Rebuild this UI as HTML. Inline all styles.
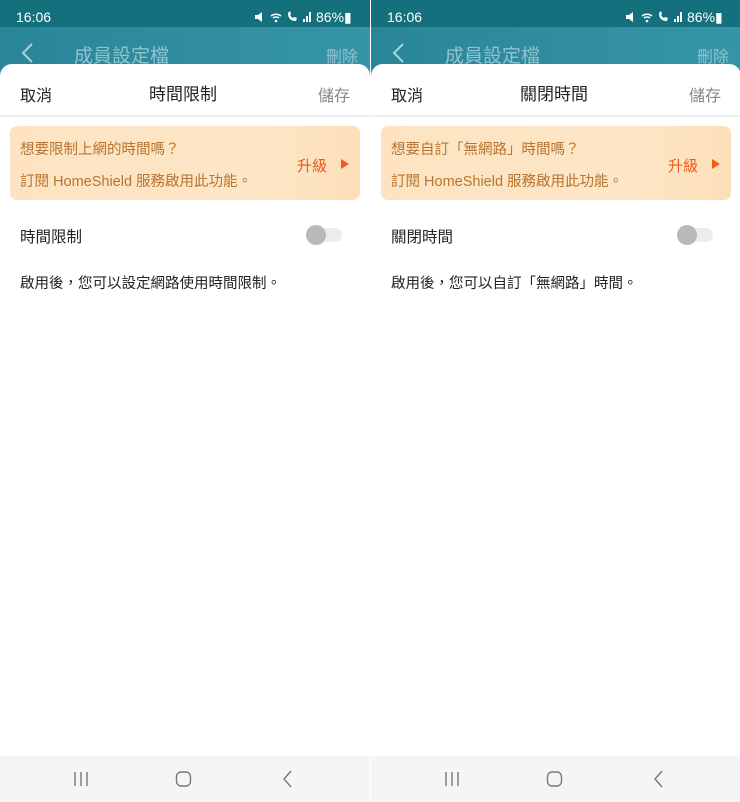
<!DOCTYPE html><html><head><meta charset="utf-8"><style>
*{margin:0;padding:0;box-sizing:border-box}
body{width:740px;height:802px;position:relative;background:#fff;font-family:"Liberation Sans","Noto Sans CJK TC",sans-serif;overflow:hidden}
.p{position:absolute;top:0;width:370px;height:802px;background:#fff;overflow:hidden}
.sb{position:absolute;top:0;left:0;right:0;height:27px;background:#15707e;color:#fff;font-size:14px}
.hd{position:absolute;top:27px;left:0;right:0;height:50px;background:linear-gradient(90deg,#2a8598,#3595a6)}
.a{position:absolute;white-space:nowrap}
.sh{position:absolute;top:64px;left:0;right:0;bottom:0;background:#fff;border-radius:12px 12px 0 0}
.bn{position:absolute;left:10px;right:10px;top:126px;height:74px;border-radius:7px;background:linear-gradient(90deg,#fde3c2,#fde6c6 70%,#fddfb9);color:#b8742f;font-size:14.5px}
.nav{position:absolute;left:0;right:0;top:756px;bottom:0;background:#f5f5f7}
.tg{position:absolute;left:306px;top:228px;width:36px;height:14px;border-radius:7px;background:#ececec}
.tg:before{content:"";position:absolute;left:0;top:-3px;width:20px;height:20px;border-radius:50%;background:#b9b9b9}
</style></head><body>
<div class="p" style="left:0">
<div class="sb"><span class="a" style="left:16px;top:9px">16:06</span><svg class="a" style="left:253px;top:11px" width="60" height="12"><path d="M2 4h3l4-3v10l-4-3H2z" fill="#fff"/><path d="M18 5a8 8 0 0 1 10 0M20 7a5 5 0 0 1 6 0" stroke="#fff" stroke-width="1.5" fill="none"/><circle cx="23" cy="10" r="1.3" fill="#fff"/><path d="M35 2q0 8 8 8l1-3-3-1-1 1q-2-1-3-3l1-1-1-3z" fill="#fff"/><path d="M50 11h2v-3h-2zM53 11h2v-6h-2zM56 11h2V1h-2z" fill="#fff"/></svg><span class="a" style="left:316px;top:9px">86%▮</span></div>
<div class="hd"><svg class="a" style="left:20px;top:15px" width="14" height="22"><path d="M12 2L3 11l9 9" stroke="#a9d3dc" stroke-width="2" fill="none"/></svg><span class="a" style="left:74px;top:14px;font-size:19px;color:#8fc3cf">成員設定檔</span><span class="a" style="left:326px;top:16px;font-size:16px;color:#8fc3cf">刪除</span></div>
<div class="sh">
<span class="a" style="left:20px;top:18px;font-size:16px;color:#222">取消</span>
<span class="a" style="left:149px;top:16px;font-size:17px;color:#222">時間限制</span>
<span class="a" style="left:318px;top:18px;font-size:16px;color:#888">儲存</span>
<div class="a" style="left:0;right:0;top:51px;height:2px;background:#eee"></div>
</div>
<div class="bn"><span class="a" style="left:10px;top:12px">想要限制上網的時間嗎？</span><span class="a" style="left:10px;top:44px">訂閱 HomeShield 服務啟用此功能。</span><span class="a" style="left:287px;top:29px;color:#f05a1e;font-size:15px">升級</span><svg class="a" style="left:331px;top:33px" width="8" height="10"><path d="M0 0L8 5L0 10Z" fill="#f05a1e"/></svg></div>
<span class="a" style="left:20px;top:225px;font-size:15.5px;color:#222">時間限制</span>
<div class="tg"></div>
<span class="a" style="left:20px;top:272px;font-size:14.5px;color:#222">啟用後，您可以設定網路使用時間限制。</span>
<div class="nav"><svg class="a" style="left:72px;top:15px" width="18" height="16"><path d="M3 1v14M9 1v14M15 1v14" stroke="#777" stroke-width="1.4"/></svg><svg class="a" style="left:175px;top:14px" width="18" height="18"><rect x="1.5" y="2" width="14" height="14" rx="4.5" stroke="#777" stroke-width="1.4" fill="none"/></svg><svg class="a" style="left:282px;top:14px" width="12" height="18"><path d="M9 1L2 9l7 8" stroke="#777" stroke-width="1.4" fill="none"/></svg></div>
</div>
<div class="p" style="left:371px">
<div class="sb"><span class="a" style="left:16px;top:9px">16:06</span><svg class="a" style="left:253px;top:11px" width="60" height="12"><path d="M2 4h3l4-3v10l-4-3H2z" fill="#fff"/><path d="M18 5a8 8 0 0 1 10 0M20 7a5 5 0 0 1 6 0" stroke="#fff" stroke-width="1.5" fill="none"/><circle cx="23" cy="10" r="1.3" fill="#fff"/><path d="M35 2q0 8 8 8l1-3-3-1-1 1q-2-1-3-3l1-1-1-3z" fill="#fff"/><path d="M50 11h2v-3h-2zM53 11h2v-6h-2zM56 11h2V1h-2z" fill="#fff"/></svg><span class="a" style="left:316px;top:9px">86%▮</span></div>
<div class="hd"><svg class="a" style="left:20px;top:15px" width="14" height="22"><path d="M12 2L3 11l9 9" stroke="#a9d3dc" stroke-width="2" fill="none"/></svg><span class="a" style="left:74px;top:14px;font-size:19px;color:#8fc3cf">成員設定檔</span><span class="a" style="left:326px;top:16px;font-size:16px;color:#8fc3cf">刪除</span></div>
<div class="sh">
<span class="a" style="left:20px;top:18px;font-size:16px;color:#222">取消</span>
<span class="a" style="left:149px;top:16px;font-size:17px;color:#222">關閉時間</span>
<span class="a" style="left:318px;top:18px;font-size:16px;color:#888">儲存</span>
<div class="a" style="left:0;right:0;top:51px;height:2px;background:#eee"></div>
</div>
<div class="bn"><span class="a" style="left:10px;top:12px">想要自訂「無網路」時間嗎？</span><span class="a" style="left:10px;top:44px">訂閱 HomeShield 服務啟用此功能。</span><span class="a" style="left:287px;top:29px;color:#f05a1e;font-size:15px">升級</span><svg class="a" style="left:331px;top:33px" width="8" height="10"><path d="M0 0L8 5L0 10Z" fill="#f05a1e"/></svg></div>
<span class="a" style="left:20px;top:225px;font-size:15.5px;color:#222">關閉時間</span>
<div class="tg"></div>
<span class="a" style="left:20px;top:272px;font-size:14.5px;color:#222">啟用後，您可以自訂「無網路」時間。</span>
<div class="nav"><svg class="a" style="left:72px;top:15px" width="18" height="16"><path d="M3 1v14M9 1v14M15 1v14" stroke="#777" stroke-width="1.4"/></svg><svg class="a" style="left:175px;top:14px" width="18" height="18"><rect x="1.5" y="2" width="14" height="14" rx="4.5" stroke="#777" stroke-width="1.4" fill="none"/></svg><svg class="a" style="left:282px;top:14px" width="12" height="18"><path d="M9 1L2 9l7 8" stroke="#777" stroke-width="1.4" fill="none"/></svg></div>
</div>
</body></html>
